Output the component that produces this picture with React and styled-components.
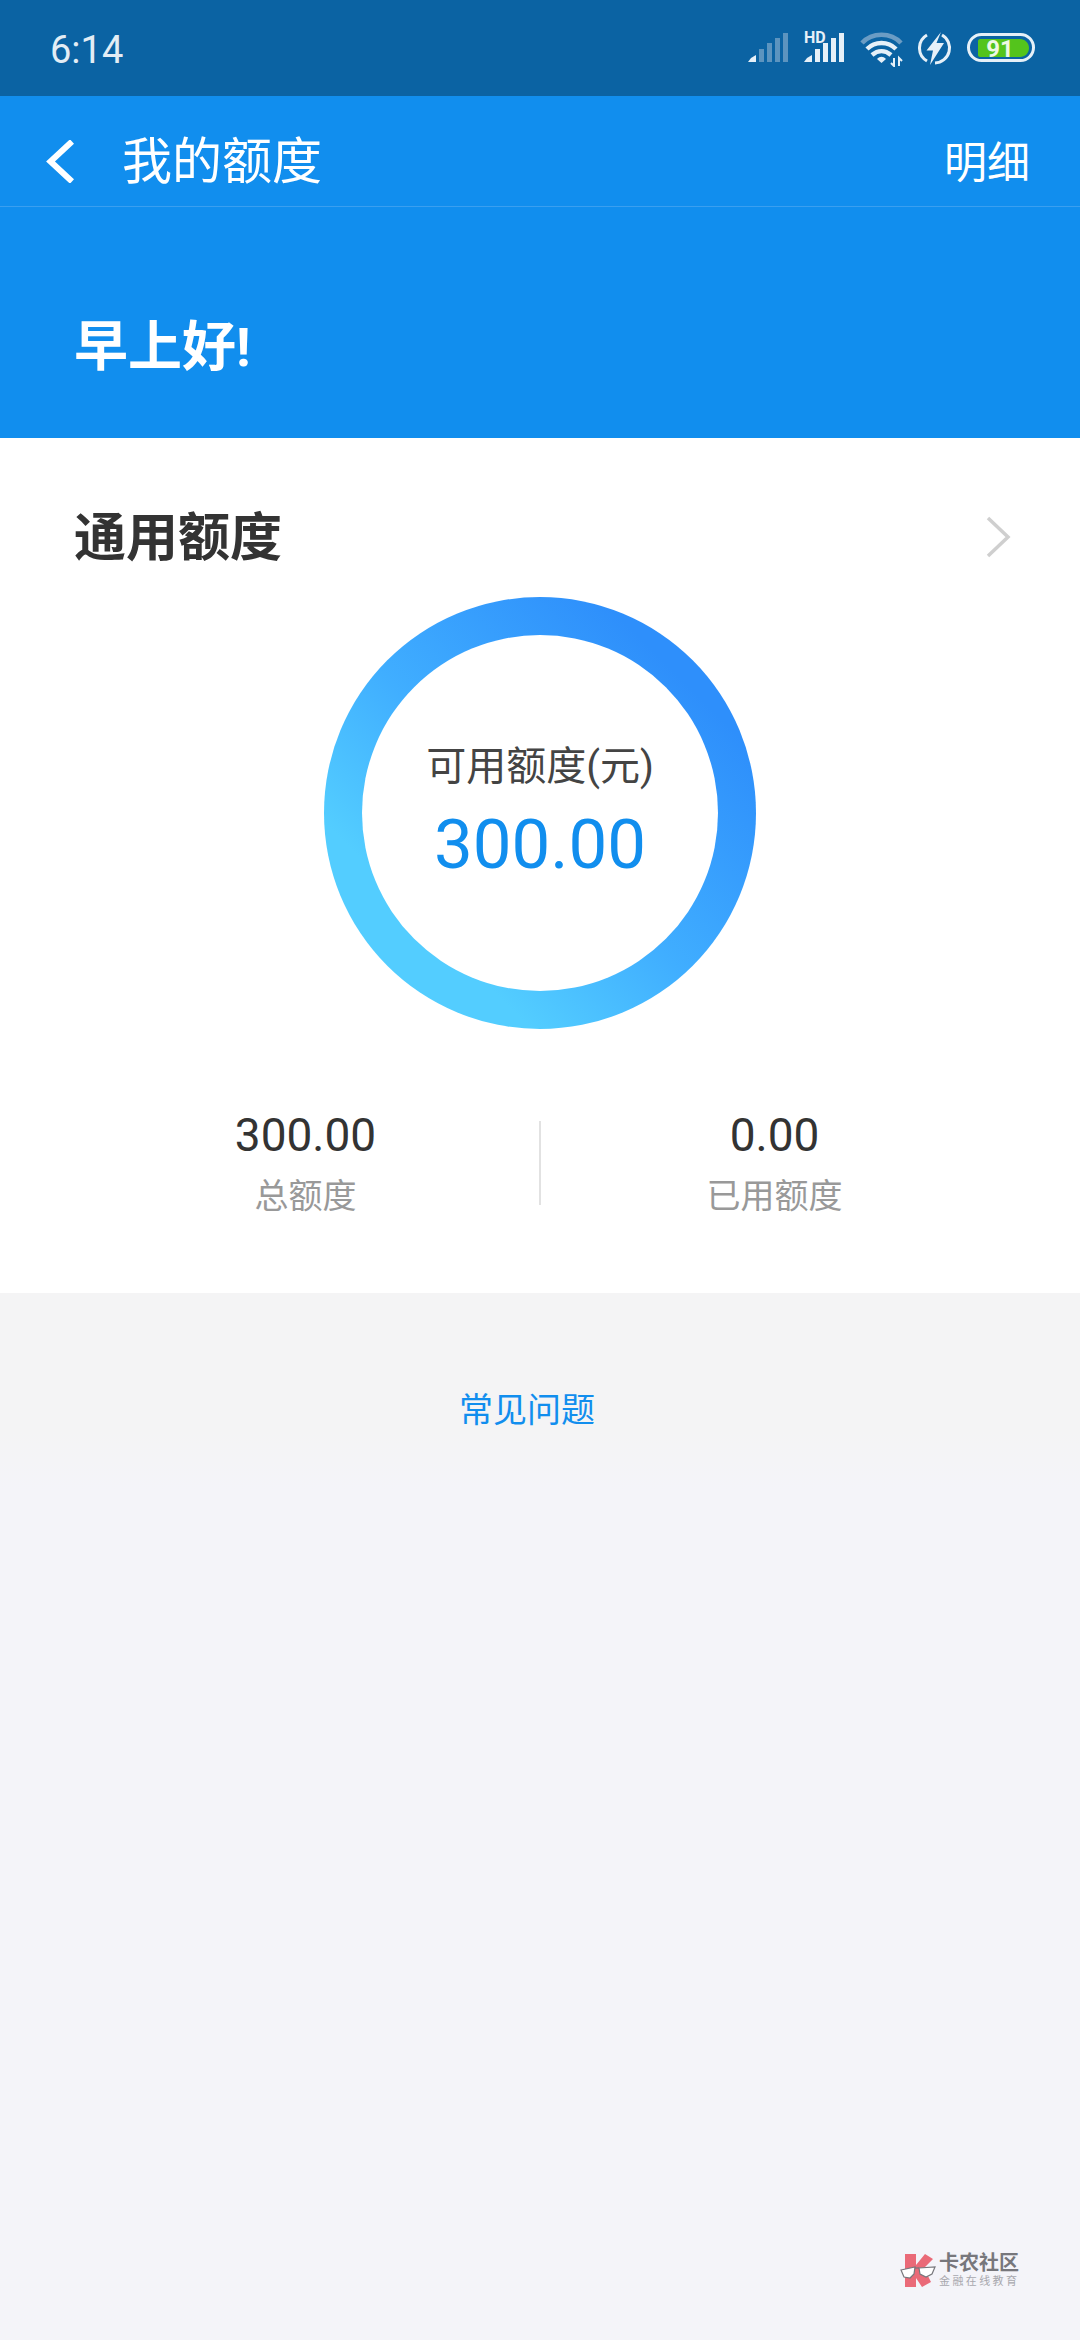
import styled, { createGlobalStyle } from "styled-components";

const GlobalStyle = createGlobalStyle`
  html, body {
    margin: 0;
    padding: 0;
    background: #f4f4f9;
  }
  * {
    box-sizing: border-box;
  }
`;

const Page = styled.div`
  position: relative;
  width: 1080px;
  height: 2340px;
  background: #f4f4f9;
  overflow: hidden;
  font-family: Roboto, "Noto Sans CJK SC", sans-serif;
`;

const StatusBar = styled.div`
  height: 96px;
  background: #0b63a3;
  display: flex;
  align-items: flex-start;
  justify-content: space-between;
  padding: 0 44px 0 50px;
`;

const Time = styled.div`
  font-size: 38px;
  line-height: 44px;
  margin-top: 28px;
  color: #e3edf5;
`;

const StatusIcons = styled.div`
  display: flex;
  align-items: flex-start;
  gap: 15px;
  margin-top: 29px;
`;

const NavBar = styled.div`
  height: 111px;
  background: #118eee;
  border-bottom: 1px solid #3a9ff0;
  display: flex;
  align-items: center;
  padding: 20px 50px 0 46px;
`;

const BackButton = styled.svg`
  width: 28px;
  height: 43px;
  margin-right: 48px;
`;

const NavTitle = styled.div`
  flex: 1;
  font-size: 50px;
  color: #fff;
  margin-bottom: 8px;
`;

const NavAction = styled.div`
  font-size: 43px;
  color: #fff;
  margin-bottom: 4px;
`;

const Greeting = styled.div`
  height: 231px;
  background: #118eee;
  padding: 99px 0 0 74px;
  font-size: 54px;
  line-height: 84px;
  font-weight: 700;
  color: #fff;
`;

const Card = styled.div`
  height: 855px;
  background: #fff;
  display: flex;
  flex-direction: column;
`;

const CardHeader = styled.div`
  height: 159px;
  display: flex;
  align-items: flex-start;
  justify-content: space-between;
  padding: 63px 69px 0 74px;
`;

const CardTitle = styled.div`
  font-size: 52px;
  line-height: 76px;
  font-weight: 700;
  color: #333;
`;

const Chevron = styled.svg`
  width: 26px;
  height: 42px;
  margin-top: 15px;
`;

const Ring = styled.div`
  align-self: center;
  width: 432px;
  height: 432px;
  border-radius: 50%;
  background: linear-gradient(225deg, #2e8ffb 18%, #40aeff 52%, #53cdff 76%);
  display: flex;
  align-items: center;
  justify-content: center;
`;

const RingInner = styled.div`
  width: 356px;
  height: 356px;
  border-radius: 50%;
  background: #fff;
  display: flex;
  flex-direction: column;
  align-items: center;
  padding-top: 104px;
`;

const RingLabel = styled.div`
  font-size: 40px;
  line-height: 56px;
  color: #444;
`;

const RingValue = styled.div`
  font-size: 69px;
  line-height: 80px;
  color: #118eee;
  margin-top: 10px;
`;

const Stats = styled.div`
  display: flex;
  align-items: center;
  padding: 0 72px;
  margin-top: 76px;
`;

const Stat = styled.div`
  flex: 1;
  display: flex;
  flex-direction: column;
  align-items: center;
`;

const StatValue = styled.div`
  font-size: 46px;
  line-height: 60px;
  color: #333;
`;

const StatLabel = styled.div`
  font-size: 34px;
  line-height: 50px;
  margin-top: 6px;
  color: #999;
`;

const Divider = styled.div`
  width: 2px;
  height: 84px;
  background: #e2e2e2;
`;

const FaqBand = styled.div`
  height: 197px;
  background: linear-gradient(#f4f4f5 70%, #f4f4f9);
  display: flex;
  justify-content: center;
  padding: 92px 26px 0 0;
`;

const FaqLink = styled.div`
  font-size: 34px;
  line-height: 50px;
  color: #118eee;
`;

// watermark sits on top of the page background
const Watermark = styled.div`
  position: absolute;
  left: 900px;
  top: 2252px;
  display: flex;
  align-items: center;
  gap: 3px;
`;

const WatermarkText = styled.div`
  display: flex;
  flex-direction: column;
`;

const WatermarkName = styled.div`
  font-size: 20px;
  line-height: 23px;
  font-weight: 700;
  color: #77777c;
`;

const WatermarkSub = styled.div`
  font-size: 11px;
  line-height: 14px;
  letter-spacing: 2.4px;
  color: #a8a8ae;
`;

const ICON = "#e6f0f8";

function Signal({ hd, dim }) {
  const bars = [
    [11, 20],
    [19, 14],
    [27, 9],
    [35, 4],
  ];
  return (
    <svg width="41" height="36" viewBox="0 0 41 36">
      {hd && (
        <text x="0" y="14" fontSize="16" fontWeight="700" fontFamily="Roboto, sans-serif" fill={ICON}>
          HD
        </text>
      )}
      <polygon points="0,33 8,33 8,26 3,29" fill={ICON} />
      {bars.map(([x, top]) => (
        <rect key={x} x={x} y={top} width="5" height={33 - top} fill={dim ? "#5c94bf" : ICON} />
      ))}
    </svg>
  );
}

function Wifi() {
  return (
    <svg width="43" height="38" viewBox="0 0 43 38" fill="none">
      <path d="M2 14C12 3 31 3 41 14" stroke="#6b9cc4" strokeWidth="4.500" />
      <path d="M7 20C15 12 28 12 36 20" stroke={ICON} strokeWidth="4.500" />
      <path d="M12 26C18 21 25 21 31 26" stroke={ICON} strokeWidth="4.500" />
      <path d="M17 30C20 27 23 27 26 30L21.500 34Z" fill={ICON} />
      <path d="M34 29V37L31 34M39 37V29L42 32" stroke={ICON} strokeWidth="2" />
    </svg>
  );
}

function BoltIcon() {
  return (
    <svg width="34" height="37" viewBox="0 0 34 37" fill="none">
      <path d="M9 6A15 15 0 0 0 9 32" stroke={ICON} strokeWidth="3" />
      <path d="M24 6A15 15 0 0 1 17 34" stroke={ICON} strokeWidth="3" />
      <path d="M23 3L8.500 21.500H15L12 36L26 14H18.500Z" fill={ICON} />
    </svg>
  );
}

function Battery() {
  return (
    <svg width="69" height="36" viewBox="0 0 69 36">
      <rect x="1.500" y="5.500" width="65" height="26" rx="13" fill="none" stroke={ICON} strokeWidth="3" />
      <path d="M13 10H53C58 10 62 14 62 19C62 24 58 28 53 28H13C12 28 11 27 11 26V12C11 11 12 10 13 10Z" fill="#54c41c" />
      <text x="33" y="28" textAnchor="middle" fontSize="24" fontWeight="700" fontFamily="Roboto, sans-serif" fill="#eef8e4">
        91
      </text>
    </svg>
  );
}

function LogoMark() {
  return (
    <svg width="36" height="36" viewBox="0 0 36 36">
      <path d="M5 1H16V12L25 1L33 6L24 15L31 29L22 34L16 25V34H5Z" fill="#ea6a78" />
      <path d="M1 17L15 14L14 21L10 25L4 24Z" fill="#fff" stroke="#77777c" strokeWidth="1.200" />
      <path d="M19 15L35 14L32 21L26 24L20 21Z" fill="#fff" stroke="#77777c" strokeWidth="1.200" />
      <path d="M15 15L19 15" stroke="#77777c" strokeWidth="1.200" />
    </svg>
  );
}

export default function App() {
  return (
    <Page>
      <GlobalStyle />
      <StatusBar>
        <Time>6:14</Time>
        <StatusIcons>
          <Signal dim />
          <Signal hd />
          <Wifi />
          <BoltIcon />
          <Battery />
        </StatusIcons>
      </StatusBar>
      <NavBar>
        <BackButton viewBox="0 0 28 43" fill="none">
          <path d="M26 1.500L4.500 21.500L26 41.500" stroke="#fff" strokeWidth="6" />
        </BackButton>
        <NavTitle>我的额度</NavTitle>
        <NavAction>明细</NavAction>
      </NavBar>
      <Greeting>早上好!</Greeting>
      <Card>
        <CardHeader>
          <CardTitle>通用额度</CardTitle>
          <Chevron viewBox="0 0 26 42" fill="none">
            <path d="M3 2L23 21L3 40" stroke="#cfcfcf" strokeWidth="3.500" />
          </Chevron>
        </CardHeader>
        <Ring>
          <RingInner>
            <RingLabel>可用额度(元)</RingLabel>
            <RingValue>300.00</RingValue>
          </RingInner>
        </Ring>
        <Stats>
          <Stat>
            <StatValue>300.00</StatValue>
            <StatLabel>总额度</StatLabel>
          </Stat>
          <Divider />
          <Stat>
            <StatValue>0.00</StatValue>
            <StatLabel>已用额度</StatLabel>
          </Stat>
        </Stats>
      </Card>
      <FaqBand>
        <FaqLink>常见问题</FaqLink>
      </FaqBand>
      <Watermark>
        <LogoMark />
        <WatermarkText>
          <WatermarkName>卡农社区</WatermarkName>
          <WatermarkSub>金融在线教育</WatermarkSub>
        </WatermarkText>
      </Watermark>
    </Page>
  );
}
